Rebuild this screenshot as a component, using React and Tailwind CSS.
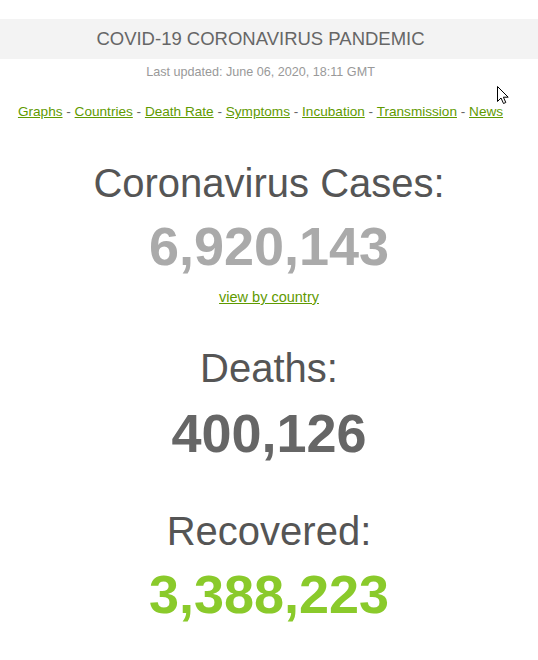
import React from "react";

const links = ["Graphs", "Countries", "Death Rate", "Symptoms", "Incubation", "Transmission", "News"];

const Counter = ({ label, value, color, top, gap }) => (
  <div className={top}>
    <h1 className="text-[40px] leading-[46px] font-normal text-[#555]">{label}</h1>
    <div className={`${gap} text-[54px] leading-[60px] font-bold ${color}`}>{value}</div>
  </div>
);

export default function App() {
  return (
    <div
      className="relative w-[538px] h-[660px] bg-white text-center overflow-hidden"
      style={{ fontFamily: '"Liberation Sans", Arial, sans-serif' }}
    >
      {/* header band */}
      <div className="mt-[19px] h-[40px] bg-[#f3f3f3] flex items-center justify-center pr-[17px]">
        <span className="text-[18.5px] text-[#666]">COVID-19 CORONAVIRUS PANDEMIC</span>
      </div>

      <div className="mt-[5px] pr-[17px] text-[12.6px] leading-[16px] text-[#999]">
        Last updated: June 06, 2020, 18:11 GMT
      </div>

      {/* nav links */}
      <div className="mt-[23px] pr-[17px] text-[13.6px] leading-[18px] text-[#666] whitespace-nowrap">
        {links.map((l, i) => (
          <React.Fragment key={l}>
            <a href="#" className="text-[#5f9a00] underline">{l}</a>
            {i < links.length - 1 && " - "}
          </React.Fragment>
        ))}
      </div>

      <Counter label="Coronavirus Cases:" value="6,920,143" color="text-[#aaa]" top="mt-[39px]" gap="mt-[10px]" />
      <div className="mt-[12px] text-[14.5px] leading-[18px]">
        <a href="#" className="text-[#5f9a00] underline">view by country</a>
      </div>

      <Counter label="Deaths:" value="400,126" color="text-[#666]" top="mt-[39px]" gap="mt-[12px]" />
      <Counter label="Recovered:" value="3,388,223" color="text-[#8aca2b]" top="mt-[45px]" gap="mt-[10px]" />

      {/* mouse pointer captured in the screenshot */}
      <svg className="absolute left-[497px] top-[86px]" width="13" height="19" viewBox="0 0 13 19">
        <path d="M0.5 0.5 L0.5 15.5 L4 12 L6.5 17.5 L8.8 16.5 L6.4 11.2 L11.2 11.2 Z" fill="#fff" stroke="#000" strokeWidth="1" strokeLinejoin="miter" />
      </svg>
    </div>
  );
}
